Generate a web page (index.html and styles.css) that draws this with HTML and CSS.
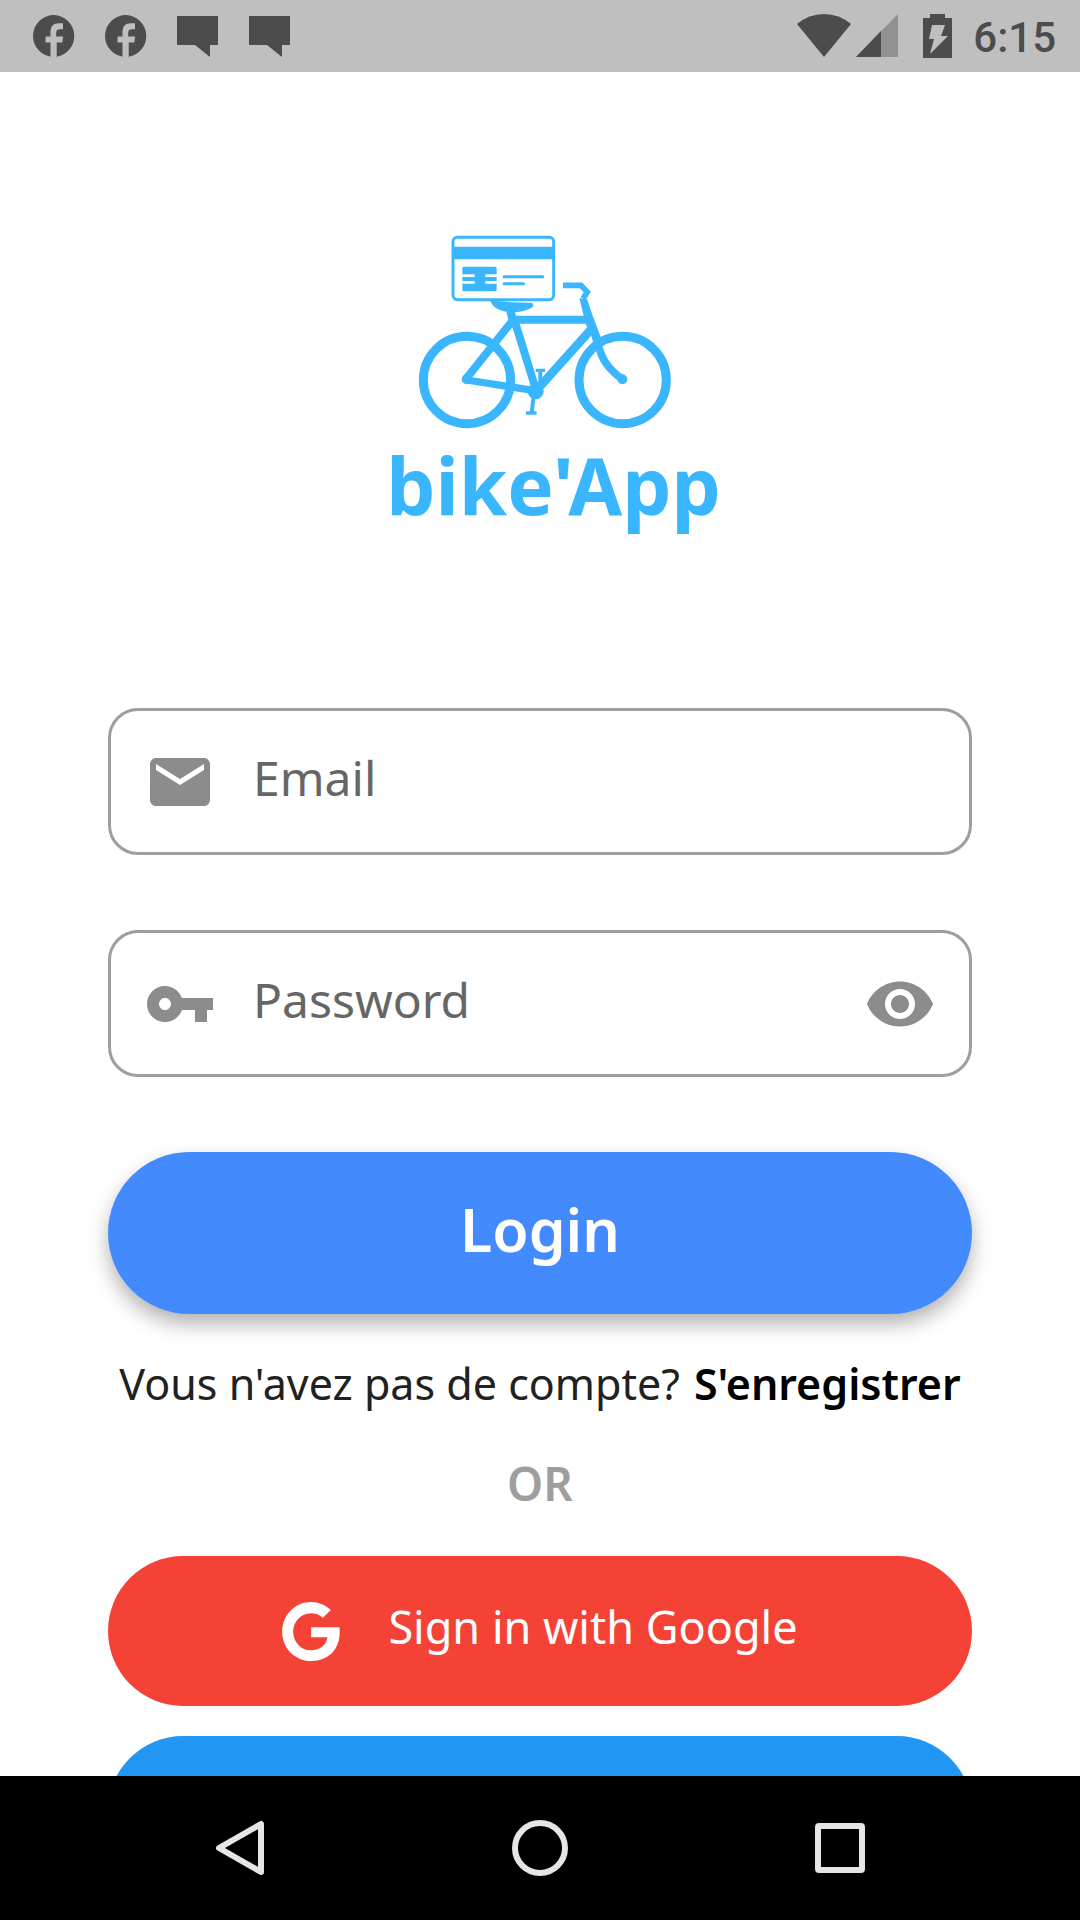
FILE: index.html
```html
<!DOCTYPE html>
<html lang="fr">
<head>
<meta charset="utf-8">
<meta name="viewport" content="width=device-width, initial-scale=1">
<title>bike'App</title>
<link rel="stylesheet" href="styles.css">
</head>
<body>
<header class="status">
  <div class="status-group notifications">
    <svg width="42" height="42" viewBox="0 0 42 42" aria-hidden="true"><path fill="currentColor" d="M21 0a21 21 0 0 0-3.500 41.700V27.500h-5V21.500h5V17c0-5.500 3-8.700 8-8.700h4.500v6h-3c-3 0-3.800 1.200-3.800 3.400v3.800h7l-1 6h-5.500v14.200A21 21 0 0 0 21 0z"/></svg>
    <svg width="42" height="42" viewBox="0 0 42 42" aria-hidden="true"><path fill="currentColor" d="M21 0a21 21 0 0 0-3.500 41.700V27.500h-5V21.500h5V17c0-5.500 3-8.700 8-8.700h4.500v6h-3c-3 0-3.800 1.200-3.800 3.400v3.800h7l-1 6h-5.500v14.200A21 21 0 0 0 21 0z"/></svg>
    <svg width="42" height="42" viewBox="0 0 42 42" aria-hidden="true"><path fill="currentColor" d="M0 1h41v29h-8v12L18 30H0z"/></svg>
    <svg width="42" height="42" viewBox="0 0 42 42" aria-hidden="true"><path fill="currentColor" d="M0 1h41v29h-8v12L18 30H0z"/></svg>
  </div>
  <div class="status-group">
    <svg width="54" height="44" viewBox="0 0 54 44" aria-hidden="true"><path fill="currentColor" d="M0 10Q12 0 27 0t27 10L27 43z"/></svg>
    <svg width="44" height="44" viewBox="0 0 44 44" aria-hidden="true"><path fill="#919191" d="M43 0v43H1z"/><path fill="currentColor" d="M26 17v26H1z"/></svg>
    <svg class="battery" width="29" height="44" viewBox="0 0 29 44" aria-hidden="true"><path fill="currentColor" d="M7 0h15v4h7v40H0V4h7z"/><path fill="#bfbfbf" d="M9 11h13l-4 11h7L7 40l4-15H6z"/></svg>
    <time>6:15</time>
  </div>
</header>

<main class="content">
  <div class="brand">
    <svg class="bike" viewBox="141 45 819 582" fill="none" stroke="currentColor" aria-hidden="true">
      <rect x="249" y="52" width="302" height="187" rx="13" stroke-width="9"/>
      <path stroke-width="37" d="M249 99h302"/>
      <path fill="currentColor" stroke="none" d="M282 140h93q5 0 5 5v18h-34v8h34v12h-34v8h34v18q0 5-5 5h-93q-5 0-5-5v-18h37v-8h-37v-12h37v-8h-37v-18q0-5 5-5z"/>
      <path stroke-width="9" stroke-linecap="round" d="M402 170h116M402 191h59"/>
      <path fill="currentColor" stroke="none" d="M360 241c42 6 85 5 125 7q7 4 4 12c-12 9-28 14-54 17l6 20-25 5-7-27c-28-5-41-15-49-34z"/>
      <g stroke-width="27"><circle cx="291" cy="480" r="131"/><circle cx="758" cy="480" r="131"/></g>
      <path stroke-width="24" d="M430 299h235M430 299L290 474M434 303l62 200"/>
      <path stroke-width="22" d="M290 480l206 32"/>
      <path stroke-width="26" d="M668 323L504 506"/>
      <path stroke-width="17" d="M579 196h54l19 20-13 20"/>
      <path fill="currentColor" stroke="none" d="M628 234l23 3 17 50 31 82-8 35-33-72-11-20z"/>
      <path stroke-width="23" d="M675 345c12 40 17 62 32 83s27 33 47 47"/>
      <g fill="currentColor" stroke="none"><circle cx="290" cy="478" r="15"/><circle cx="757" cy="478" r="15"/><circle cx="497" cy="514" r="24"/></g>
      <path stroke-width="10" d="M497 451h28M468 579h32"/>
      <path stroke-width="12" d="M511 451v40l-20 35-6 54"/>
    </svg>
    <h1>bike'App</h1>
  </div>

  <form class="login">
    <label class="field">
      <svg class="icon" viewBox="0 0 24 24" aria-hidden="true"><path fill="currentColor" d="M20 4H4c-1.100 0-1.990.9-1.990 2L2 18c0 1.100.9 2 2 2h16c1.100 0 2-.9 2-2V6c0-1.100-.9-2-2-2zm0 4l-8 5-8-5V6l8 5 8-5v2z"/></svg>
      <input type="email" placeholder="Email" aria-label="Email">
    </label>
    <div class="field">
      <svg class="icon" viewBox="0 0 24 24" aria-hidden="true"><path fill="currentColor" d="M12.650 10C11.830 7.670 9.610 6 7 6c-3.310 0-6 2.690-6 6s2.690 6 6 6c2.610 0 4.830-1.670 5.650-4H17v4h4v-4h2v-4H12.650zM7 14c-1.100 0-2-.9-2-2s.9-2 2-2 2 .9 2 2-.9 2-2 2z"/></svg>
      <input type="password" placeholder="Password" aria-label="Password">
      <button class="reveal" type="button" aria-label="Show password"><svg class="icon" viewBox="0 0 24 24" aria-hidden="true"><path fill="currentColor" d="M12 4.500C7 4.500 2.730 7.610 1 12c1.730 4.390 6 7.500 11 7.500s9.270-3.110 11-7.500c-1.730-4.390-6-7.500-11-7.500zM12 17c-2.760 0-5-2.240-5-5s2.240-5 5-5 5 2.240 5 5-2.240 5-5 5zm0-8c-1.660 0-3 1.340-3 3s1.340 3 3 3 3-1.340 3-3-1.340-3-3-3z"/></svg></button>
    </div>
    <button class="submit" type="submit">Login</button>
  </form>

  <p class="register"><span>Vous n'avez pas de compte?</span> <a href="#register">S'enregistrer</a></p>
  <p class="or">OR</p>

  <div class="social">
    <button class="google" type="button">
      <svg width="58" height="59" viewBox="573 461 173 177" aria-hidden="true"><path fill="currentColor" d="M719 485l-24 23c-10-9-22-13-36-13-30 0-53 25-53 55s23 56 54 56c26 0 45-15 49-39h-49v-30h85c6 60-28 101-85 101-49 0-87-39-87-88s38-89 87-89c23 0 43 9 59 24z"/></svg>
      <span>Sign in with Google</span>
    </button>
    <button class="facebook" type="button" aria-label="Sign in with Facebook"></button>
  </div>
</main>

<nav class="navbar">
  <button type="button" aria-label="Back"><svg viewBox="0 0 56 56"><path d="M49 4v48L7 28z"/></svg></button>
  <button type="button" aria-label="Home"><svg viewBox="0 0 56 56"><circle cx="28" cy="28" r="25"/></svg></button>
  <button type="button" aria-label="Recent apps"><svg viewBox="0 0 56 56"><rect x="6" y="6" width="44" height="44" rx="1"/></svg></button>
</nav>
</body>
</html>
```
FILE: styles.css
```css
* {
  box-sizing: border-box;
}

body {
  display: flex;
  flex-direction: column;
  height: 100vh;
  margin: 0;
  background: #fff;
  color: #212121;
  font-family: "Noto Sans", "Open Sans", sans-serif;
}

svg {
  display: block;
  flex: none;
}

button {
  border: 0;
  padding: 0;
  background: none;
  font: inherit;
  cursor: pointer;
}

h1,
p {
  margin: 0;
}

/* Status bar */
.status {
  display: flex;
  flex: none;
  align-items: center;
  justify-content: space-between;
  height: 72px;
  padding: 0 24px 0 33px;
  background: #bfbfbf;
  color: #4c4c4c;
}

.status-group {
  display: flex;
  align-items: center;
  gap: 4px;
}

.notifications {
  gap: 30px;
}

.battery {
  margin: 0 17px 0 20px;
}

.status time {
  padding-top: 4px;
  font: 500 42px/48px Roboto, sans-serif;
}

/* Scrolling page */
.content {
  flex: 1;
  min-height: 0;
  overflow: hidden;
  padding: 163px 10% 0;
}

.brand {
  display: flex;
  flex-direction: column;
  align-items: center;
  gap: 16px;
  padding-left: 27px;
  color: #3ab6ff;
}

.bike {
  width: 273px;
  height: 194px;
}

.brand h1 {
  font-size: 78px;
  line-height: 80px;
}

.login {
  display: flex;
  flex-direction: column;
  gap: 75px;
  margin-top: 183px;
}

.field {
  display: flex;
  align-items: center;
  gap: 37px;
  height: 147px;
  padding: 0 33px;
  border: 3px solid #9e9e9e;
  border-radius: 30px;
  color: #8c8c8c;
}

.icon {
  width: 72px;
  height: 72px;
}

.field input {
  flex: 1;
  min-width: 0;
  border: 0;
  outline: 0;
  padding: 0 0 8px;
  background: none;
  color: #212121;
  font: inherit;
  font-size: 48px;
}

.field input::placeholder {
  color: #666;
  opacity: 1;
}

.reveal {
  color: inherit;
}

.submit {
  height: 162px;
  padding-bottom: 8px;
  border-radius: 81px;
  background: #448aff;
  box-shadow: 0 10px 20px rgba(0, 0, 0, 0.3);
  color: #fff;
  font-size: 59px;
  font-weight: 600;
}

.register {
  display: flex;
  align-items: baseline;
  justify-content: center;
  gap: 14px;
  margin-top: 40px;
  font-size: 43px;
  line-height: 60px;
  white-space: nowrap;
}

.register a {
  color: #000;
  font-weight: 600;
  text-decoration: none;
}

.or {
  margin-top: 39px;
  color: #9e9e9e;
  font-size: 46px;
  font-weight: 600;
  line-height: 60px;
  text-align: center;
}

.social {
  display: flex;
  flex-direction: column;
  gap: 30px;
  margin-top: 43px;
}

.social button {
  display: flex;
  align-items: center;
  justify-content: center;
  gap: 48px;
  height: 150px;
  border-radius: 75px;
  color: #fff;
  font-size: 45px;
}

.social span {
  padding-bottom: 10px;
}

.social .google {
  background: #f44336;
}

.social .facebook {
  background: #2196f3;
}

/* System navigation */
.navbar {
  display: flex;
  flex: none;
  height: 144px;
  padding: 0 90px;
  background: #000;
}

.navbar button {
  display: flex;
  flex: 1;
  align-items: center;
  justify-content: center;
}

.navbar svg {
  width: 56px;
  height: 56px;
  fill: none;
  stroke: #e6e6e6;
  stroke-width: 6;
  stroke-linejoin: round;
}
```
